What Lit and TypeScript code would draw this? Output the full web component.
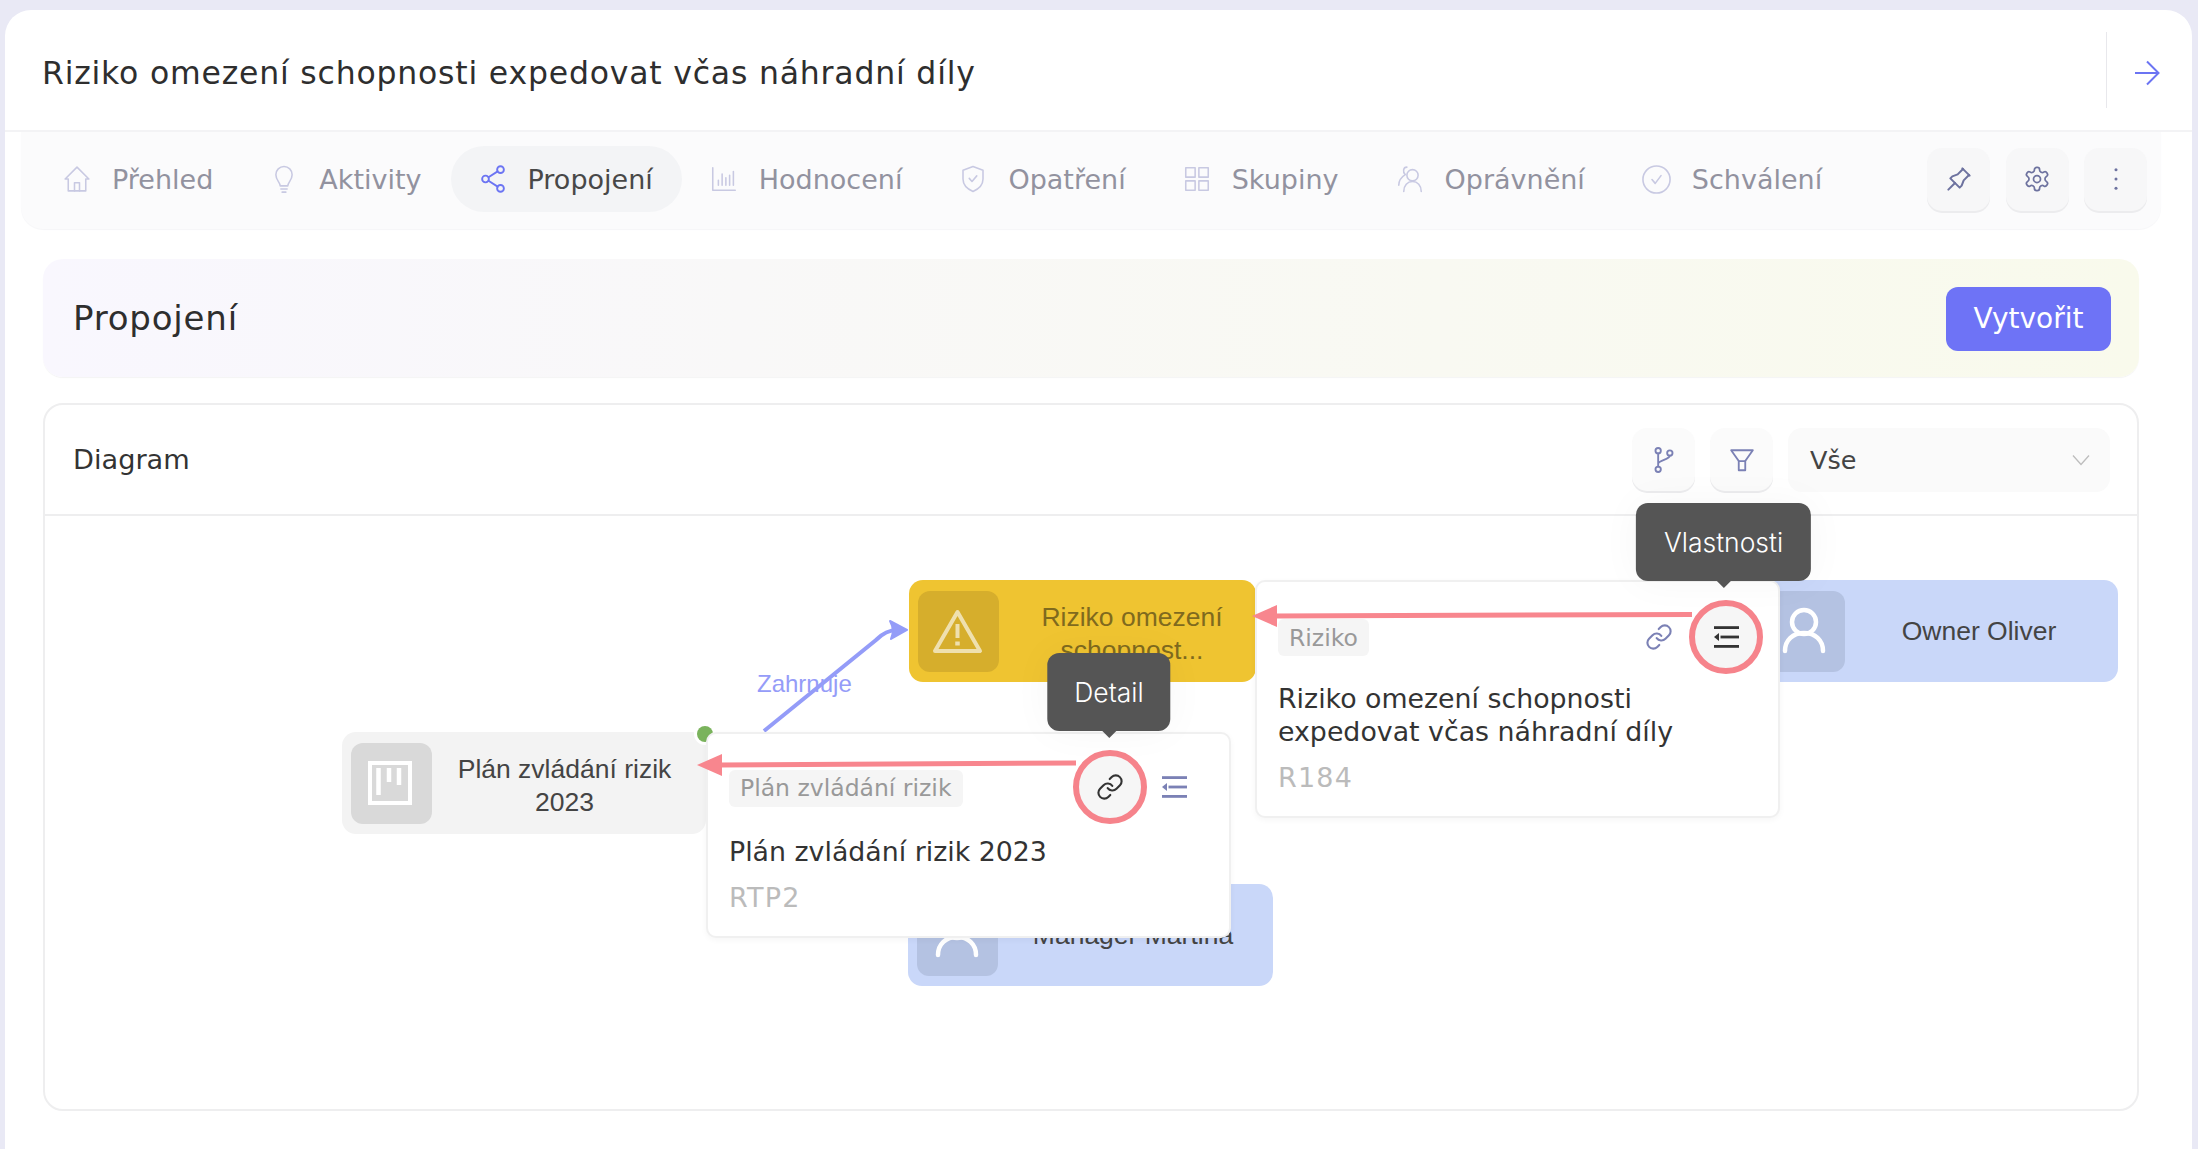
import { LitElement, html, css } from 'lit';
import { customElement } from 'lit/decorators.js';

const stroke = (body: unknown, size = 30, sw = 1.25) => html`<svg
  width=${size}
  height=${size}
  viewBox="0 0 24 24"
  fill="none"
  stroke="currentColor"
  stroke-width=${sw}
  stroke-linecap="round"
  stroke-linejoin="round"
>${body}</svg>`;

const icons: Record<string, () => unknown> = {
  home: () => stroke(html`<svg><path d="M2.500 12 12 2.500l9.500 9.500H19v9.500H5V12z" /><path d="M10 21.500V15h4v6.500" /></svg>`),
  bulb: () => stroke(html`<svg><path d="M9 17.500c0-2.500-3.500-4.500-3.500-9a6.500 6.500 0 0 1 13 0c0 4.500-3.500 6.500-3.500 9z" /><path d="M9.500 20h5M10.500 22.500h3" /></svg>`),
  share: () => stroke(html`<svg><circle cx="18" cy="4.500" r="2.700" /><circle cx="6" cy="12" r="2.700" /><circle cx="18" cy="19.500" r="2.700" /><path d="M8.400 10.600l7.300-4.700M8.400 13.400l7.300 4.700" /></svg>`, 30, 1.5),
  chart: () => stroke(html`<svg><path d="M3 3v18h18" /><path d="M7.500 17v-4M10.500 17V8M13.500 17v-6M16.500 17V9M19.500 17V6" /></svg>`),
  shield: () => stroke(html`<svg><path d="M12 2 4 5v7c0 5 3.500 8 8 10 4.500-2 8-5 8-10V5z" /><path d="M9 11.500l2.200 2.500L15 9.500" /></svg>`),
  grid: () => stroke(html`<svg><rect x="3" y="3" width="7.500" height="7.500" /><rect x="13.500" y="3" width="7.500" height="7.500" /><rect x="3" y="13.500" width="7.500" height="7.500" /><rect x="13.500" y="13.500" width="7.500" height="7.500" /></svg>`),
  users: () => stroke(html`<svg><circle cx="14" cy="9" r="4.500" /><path d="M7 22c0-5 3-8 7-8s7 3 7 8" /><path d="M9.500 2.500C6.500 2.500 6 6.500 8.200 8.500 5 10.500 3 13.500 3 17" /></svg>`),
  check: () => stroke(html`<svg><circle cx="12" cy="12" r="10.500" /><path d="M8.500 12l2.500 3 4.500-6" /></svg>`, 31),
  pin: () => stroke(html`<svg><path d="M15 4.500l-4 4-4 1.500-1.500 1.500 7 7 1.500-1.500 1.500-4 4-4" /><path d="M9 15l-5 5" /><path d="M14.500 4l5.500 5.500" /></svg>`, 32, 1.5),
  gear: () => stroke(html`<svg><path d="M12.220 2h-.44a2 2 0 0 0-2 2v.18a2 2 0 0 1-1 1.730l-.43.250a2 2 0 0 1-2 0l-.15-.08a2 2 0 0 0-2.730.730l-.22.380a2 2 0 0 0 .730 2.730l.15.1a2 2 0 0 1 1 1.720v.510a2 2 0 0 1-1 1.740l-.15.090a2 2 0 0 0-.730 2.730l.22.380a2 2 0 0 0 2.730.730l.15-.08a2 2 0 0 1 2 0l.43.250a2 2 0 0 1 1 1.730V20a2 2 0 0 0 2 2h.44a2 2 0 0 0 2-2v-.18a2 2 0 0 1 1-1.730l.43-.250a2 2 0 0 1 2 0l.15.08a2 2 0 0 0 2.730-.730l.22-.390a2 2 0 0 0-.730-2.730l-.15-.08a2 2 0 0 1-1-1.740v-.5a2 2 0 0 1 1-1.740l.15-.090a2 2 0 0 0 .730-2.730l-.22-.380a2 2 0 0 0-2.730-.730l-.15.08a2 2 0 0 1-2 0l-.43-.250a2 2 0 0 1-1-1.730V4a2 2 0 0 0-2-2z" /><circle cx="12" cy="12" r="3" /></svg>`, 28, 1.5),
  dots: () => html`<svg width="28" height="28" viewBox="0 0 24 24" fill="currentColor"><circle cx="12" cy="4" r="1.300" /><circle cx="12" cy="12" r="1.300" /><circle cx="12" cy="20" r="1.300" /></svg>`,
  branch: () => stroke(html`<svg><circle cx="7" cy="4" r="2.300" /><circle cx="7" cy="20" r="2.300" /><circle cx="17" cy="6" r="2.300" /><path d="M7 6.300v11.400M17 8.300c0 3-10 4-10 7" /></svg>`, 28, 1.6),
  filter: () => stroke(html`<svg><path d="M2 3h20l-7 10v8.500H9V13z" /><path d="M9 13h6" /></svg>`, 26, 1.7),
  link: () => stroke(html`<svg><path d="M10 13a5 5 0 0 0 7.540.54l3-3a5 5 0 0 0-7.070-7.070l-1.720 1.710" /><path d="M14 11a5 5 0 0 0-7.540-.54l-3 3a5 5 0 0 0 7.070 7.070l1.710-1.710" /></svg>`, 28, 1.8),
  props: () => html`<svg width="26" height="22" viewBox="0 0 26 22" fill="currentColor"><rect x="1" y="0.200" width="25" height="2.800" /><rect x="7.500" y="9.600" width="18.500" height="2.800" /><rect x="1" y="19" width="25" height="2.800" /><path d="M1 11l5-4v8z" /></svg>`,
  chevron: () => html`<svg width="18" height="12" viewBox="0 0 18 12" fill="none" stroke="currentColor" stroke-width="1.300"><path d="M1 1.500l8 9 8-9" /></svg>`,
  arrow: () => html`<svg width="26" height="26" viewBox="0 0 26 26" fill="none" stroke="currentColor" stroke-width="2"><path d="M1 13h23M13 1.500 24.500 13 13 24.500" /></svg>`,
  warning: () => html`<svg width="81" height="81" viewBox="0 0 81 81" fill="none" stroke="rgba(255,255,255,.62)" stroke-width="4" stroke-linejoin="round"><path d="M39.500 21 62 60H17z" /><path d="M39.500 33v14" /><path d="M39.500 50.500v4" stroke-width="4.500" /></svg>`,
  board: () => html`<svg width="81" height="81" viewBox="0 0 81 81" fill="none" stroke="#fff" stroke-width="4"><rect x="19" y="20" width="40" height="40" /><path d="M27.500 25v27M38 25v14M48 25v17" stroke-width="4.500" /></svg>`,
  person: () => html`<svg width="81" height="81" viewBox="0 0 81 81" fill="none" stroke="#fff" stroke-width="4.500" stroke-linecap="round"><circle cx="40" cy="31" r="12" /><path d="M21 60c0-11 8-18 19-18s19 7 19 18" /></svg>`,
};

interface Tab {
  label: string;
  icon: string;
  active?: boolean;
}

const tabs: Tab[] = [
  { label: 'Přehled', icon: 'home' },
  { label: 'Aktivity', icon: 'bulb' },
  { label: 'Propojení', icon: 'share', active: true },
  { label: 'Hodnocení', icon: 'chart' },
  { label: 'Opatření', icon: 'shield' },
  { label: 'Skupiny', icon: 'grid' },
  { label: 'Oprávnění', icon: 'users' },
  { label: 'Schválení', icon: 'check' },
];

// diagram coordinates are page pixels, the canvas starts at 45,516
const place = (x: number, y: number) => `left:${x - 45}px;top:${y - 516}px`;

@customElement('app-root')
export class AppRoot extends LitElement {
  static styles = css`
    :host {
      display: block;
      width: 2198px;
      height: 1149px;
      box-sizing: border-box;
      padding: 10px 6px 0 5px;
      background: #e9e9f5;
      overflow: hidden;
      font-family: 'DejaVu Sans', sans-serif;
      color: #333;
    }
    * {
      box-sizing: border-box;
    }
    svg {
      display: block;
      flex: none;
    }
    .panel {
      height: 100%;
      background: #fff;
      border-radius: 26px 26px 0 0;
      display: flex;
      flex-direction: column;
    }
    .top {
      height: 122px;
      flex: none;
      display: flex;
      align-items: center;
      padding: 0 32px 0 37px;
      border-bottom: 2px solid #f3f3f5;
    }
    h1 {
      margin: 5px 0 0;
      flex: 1;
      font-size: 31.500px;
      font-weight: 400;
      letter-spacing: 0.8px;
      color: #2e2e2e;
    }
    .back {
      align-self: flex-start;
      margin-top: 22px;
      height: 76px;
      border-left: 1px solid #e8e8ec;
      padding: 6px 0 0 27px;
      display: flex;
      align-items: center;
      color: #6b74f3;
    }
    .tabbar {
      height: 97px;
      flex: none;
      margin: 0 31px 0 16px;
      padding: 0 14px 3px;
      display: flex;
      align-items: center;
      background: #fbfbfc;
      border-radius: 0 0 22px 22px;
      box-shadow: 0 1px 1px #f6f6f8;
    }
    .tab {
      height: 66px;
      padding: 0 29px 0 27px;
      display: flex;
      align-items: center;
      gap: 20px;
      border-radius: 33px;
      font-size: 27px;
      color: #92929f;
    }
    .tab svg {
      color: #c8c9e2;
    }
    .tab.active {
      background: #f3f4f6;
      color: #484848;
    }
    .tab.active svg {
      color: #6b74f3;
    }
    .tools {
      margin-left: auto;
      display: flex;
      gap: 15.500px;
    }
    .tool {
      width: 63px;
      height: 63px;
      display: flex;
      align-items: center;
      justify-content: center;
      background: #f7f7f8;
      border-radius: 15px;
      box-shadow: 0 2px 0 #ececee;
      color: #6d729f;
    }
    .content {
      flex: 1;
      padding: 30px 53px 0 38px;
    }
    .banner {
      height: 118px;
      display: flex;
      align-items: center;
      justify-content: space-between;
      padding: 0 28px 0 30px;
      background: linear-gradient(90deg, #f9f7fe, #f9faec);
      border-radius: 20px;
      box-shadow: 0 1px 1px #f4f4f4;
    }
    h2 {
      margin: 0;
      font-size: 34px;
      font-weight: 400;
      letter-spacing: 0.8px;
      color: #2e2e2e;
    }
    .create {
      width: 165px;
      height: 64px;
      margin-top: 1px;
      display: flex;
      align-items: center;
      justify-content: center;
      background: #6e73f6;
      border-radius: 12px;
      font-size: 28px;
      color: #fff;
    }
    .card {
      margin-top: 26px;
      height: 708px;
      display: flex;
      flex-direction: column;
      border: 2px solid #eeeeef;
      border-radius: 20px;
    }
    .card-head {
      height: 111px;
      flex: none;
      display: flex;
      align-items: center;
      gap: 15px;
      padding: 0 27px 0 28px;
      border-bottom: 2px solid #eeeeef;
    }
    .card-title {
      flex: 1;
      font-size: 27.200px;
      color: #333;
    }
    .select {
      width: 322px;
      height: 64px;
      display: flex;
      align-items: center;
      justify-content: space-between;
      padding: 0 20px 0 22px;
      background: #fafafa;
      border-radius: 14px;
      font-size: 25.500px;
      color: #444;
    }
    .select svg {
      color: #bdbdbd;
    }
    .card-head .tool {
      background: #fbfbfb;
      color: #7b81b5;
    }
    .canvas {
      position: relative;
      flex: 1;
    }
    .node {
      position: absolute;
      height: 102px;
      width: 365px;
      display: flex;
      align-items: center;
      padding: 0 9px;
      border-radius: 14px;
      font-family: 'Liberation Sans', Arial, sans-serif;
      font-size: 26.500px;
      line-height: 33px;
      color: #444;
    }
    .node-icon {
      width: 81px;
      height: 81px;
      flex: none;
      border-radius: 12px;
    }
    .node-text {
      flex: 1;
      text-align: center;
      padding: 0 4px;
    }
    .node-text.two {
      padding-top: 6px;
    }
    .node.risk {
      width: 347px;
      background: #efc431;
      color: #7f6a1e;
    }
    .node.risk .node-text {
      margin-right: -18px;
    }
    .node.risk .node-icon {
      background: #d6ae2c;
    }
    .node.user {
      background: #c9d7f9;
    }
    .node.user .node-icon {
      background: #b4c2e2;
    }
    .node.user .node-text {
      padding-left: 8px;
    }
    .node.owner {
      width: 363px;
    }
    .node.plan {
      width: 364px;
      background: #f3f3f3;
    }
    .node.plan .node-icon {
      background: #d9d9d9;
    }
    .overlay {
      position: absolute;
      left: 0;
      top: 0;
      overflow: visible;
    }
    .edge-label {
      position: absolute;
      font-family: 'Liberation Sans', Arial, sans-serif;
      font-size: 24px;
      color: #959cf8;
    }
    .port {
      position: absolute;
      width: 16px;
      height: 16px;
      border-radius: 50%;
      background: #7ab35c;
      box-shadow: 0 0 0 3px #fff;
    }
    .popup {
      position: absolute;
      width: 525px;
      padding: 36px 21px 22px;
      background: #fff;
      border: 2px solid #f0f0f0;
      border-radius: 10px;
      box-shadow: 0 2px 6px rgba(0, 0, 0, 0.04);
    }
    .popup.plan {
      padding-top: 34.500px;
    }
    .popup-row {
      display: flex;
      align-items: center;
      height: 37px;
    }
    .badge {
      height: 37px;
      margin-top: 2px;
      display: flex;
      align-items: center;
      padding: 0 11px;
      background: #f5f5f5;
      border-radius: 6px;
      font-size: 23.500px;
      color: #999;
    }
    .actions {
      margin-left: auto;
      display: flex;
      align-items: center;
      gap: 36px;
      padding-right: 20px;
    }
    .popup.risk .actions {
      gap: 39px;
      padding-right: 17px;
    }
    .action {
      position: relative;
      width: 28px;
      height: 28px;
      display: flex;
      align-items: center;
      justify-content: center;
      color: #7b81b5;
    }
    .action.ringed {
      color: #333;
    }
    .action.ringed svg {
      position: relative;
    }
    .action.ringed::before {
      content: '';
      box-sizing: border-box;
      position: absolute;
      left: -23px;
      top: -23px;
      width: 74px;
      height: 74px;
      background: #f6f6f6;
      border: 6px solid #f6838b;
      border-radius: 50%;
    }
    .tip {
      position: absolute;
      bottom: 70px;
      left: 50%;
      transform: translateX(calc(-50% - 2.500px));
      height: 78px;
      display: flex;
      align-items: center;
      padding: 0 28px;
      background: #555;
      border-radius: 12px;
      box-shadow: 0 0 40px rgba(0, 0, 0, 0.04);
      font-family: Inter, sans-serif;
      font-size: 26.500px;
      font-weight: 300;
      white-space: nowrap;
      color: #fff;
    }
    .popup.plan .tip {
      padding: 0 27px;
      transform: translateX(calc(-50% - 1px));
    }
    .tip::after {
      content: '';
      position: absolute;
      left: 50%;
      top: 100%;
      margin-left: -7px;
      border: 7px solid transparent;
      border-top-color: #555;
      border-bottom: 0;
    }
    .popup-title {
      margin-top: 27px;
      font-size: 26.800px;
      line-height: 33px;
      color: #333;
    }
    .popup.plan .popup-title {
      margin-top: 29px;
    }
    .popup-code {
      margin-top: 13px;
      font-size: 27px;
      line-height: 33px;
      letter-spacing: 1.200px;
      color: #bbb;
    }
  `;

  render() {
    return html`
      <div class="panel">
        <div class="top">
          <h1>Riziko omezení schopnosti expedovat včas náhradní díly</h1>
          <div class="back">${icons.arrow()}</div>
        </div>
        <div class="tabbar">
          ${tabs.map(
            (t) => html`<div class="tab ${t.active ? 'active' : ''}">${icons[t.icon]()}<span>${t.label}</span></div>`,
          )}
          <div class="tools">
            <div class="tool">${icons.pin()}</div>
            <div class="tool">${icons.gear()}</div>
            <div class="tool">${icons.dots()}</div>
          </div>
        </div>
        <div class="content">
          <div class="banner">
            <h2>Propojení</h2>
            <div class="create">Vytvořit</div>
          </div>
          <div class="card">
            <div class="card-head">
              <div class="card-title">Diagram</div>
              <div class="tool">${icons.branch()}</div>
              <div class="tool">${icons.filter()}</div>
              <div class="select"><span>Vše</span>${icons.chevron()}</div>
            </div>
            <div class="canvas">${this.renderDiagram()}</div>
          </div>
        </div>
      </div>
    `;
  }

  private renderDiagram() {
    return html`
      <div class="node plan" style=${place(342, 732)}>
        <div class="node-icon">${icons.board()}</div>
        <div class="node-text two">Plán zvládání rizik 2023</div>
      </div>
      <div class="node risk" style=${place(909, 580)}>
        <div class="node-icon">${icons.warning()}</div>
        <div class="node-text two">Riziko omezení schopnost...</div>
      </div>
      <div class="node user owner" style=${place(1755, 580)}>
        <div class="node-icon">${icons.person()}</div>
        <div class="node-text">Owner Oliver</div>
      </div>
      <div class="node user" style=${place(908, 884)}>
        <div class="node-icon">${icons.person()}</div>
        <div class="node-text">Manager Martina</div>
      </div>

      <svg class="overlay" width="2092" height="593" viewBox="45 516 2092 593" fill="none">
        <path d="M764 731 L876 640 Q886 630 897 630" stroke="#949cf8" stroke-width="4" />
        <path d="M890 621 L907 630 L891 639 Q895 630 890 621z" fill="#949cf8" stroke="#949cf8" stroke-width="2" stroke-linejoin="round" />
      </svg>
      <div class="edge-label" style=${place(757, 670)}>Zahrnuje</div>
      <div class="port" style=${place(697, 726)}></div>

      <div class="popup plan" style=${place(706, 732)}>
        <div class="popup-row">
          <div class="badge">Plán zvládání rizik</div>
          <div class="actions">
            <div class="action ringed">${icons.link()}<div class="tip">Detail</div></div>
            <div class="action">${icons.props()}</div>
          </div>
        </div>
        <div class="popup-title">Plán zvládání rizik 2023</div>
        <div class="popup-code">RTP2</div>
      </div>
      <div class="popup risk" style=${place(1255, 580)}>
        <div class="popup-row">
          <div class="badge">Riziko</div>
          <div class="actions">
            <div class="action">${icons.link()}</div>
            <div class="action ringed">${icons.props()}<div class="tip">Vlastnosti</div></div>
          </div>
        </div>
        <div class="popup-title">Riziko omezení schopnosti expedovat včas náhradní díly</div>
        <div class="popup-code">R184</div>
      </div>

      <svg class="overlay" width="2092" height="593" viewBox="45 516 2092 593" fill="none">
        <path d="M1692 614.500 L1275 616" stroke="#f8868e" stroke-width="5" />
        <path d="M1252 616 L1277 605 V627z" fill="#f8868e" />
        <path d="M1076 763 L720 765" stroke="#f8868e" stroke-width="5" />
        <path d="M697 765 L722 754 V776z" fill="#f8868e" />
      </svg>
    `;
  }
}
